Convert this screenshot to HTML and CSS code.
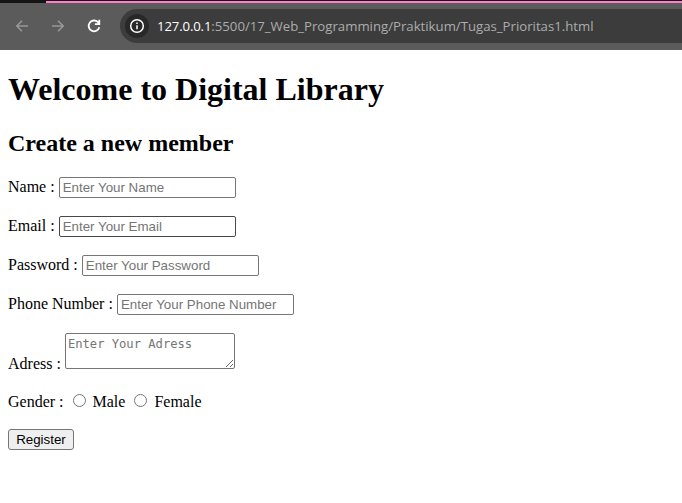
FILE: index.html
```html
<!DOCTYPE html>
<html lang="en">
<head>
<meta charset="utf-8">
<title>Digital Library</title>
<link rel="stylesheet" href="styles.css">
</head>
<body>
<header class="browser">
  <div class="tabstrip"><div class="tab-edge"></div></div>
  <div class="toolbar">
    <svg class="nav dim" viewBox="0 0 16 16"><path d="M14 8H3M8 2.8L2.8 8 8 13.2"/></svg>
    <svg class="nav dim" viewBox="0 0 16 16"><path d="M2 8h11M8 2.8L13.2 8 8 13.2"/></svg>
    <svg class="nav" viewBox="0 0 16 16"><path d="M13.3 9.2A5.4 5.4 0 1 1 12 4.2L13.3 5.6M13.3 1.8v4.4H8.9"/></svg>
    <div class="address">
      <span class="info"><svg viewBox="0 0 16 16"><circle cx="8" cy="8" r="6.3"/><path d="M8 7.2v4M8 4.5v1.6"/></svg></span>
      <span class="url"><span class="host">127.0.0.1</span>:5500/17_Web_Programming/Praktikum/Tugas_Prioritas1.html</span>
    </div>
  </div>
</header>
<main class="page">
  <h1>Welcome to Digital Library</h1>
  <h2>Create a new member</h2>
  <form>
    <div class="row"><label>Name : <input type="text" placeholder="Enter Your Name"></label></div>
    <div class="row"><label>Email : <input class="active" type="text" placeholder="Enter Your Email"></label></div>
    <div class="row"><label>Password : <input type="password" placeholder="Enter Your Password"></label></div>
    <div class="row"><label>Phone Number : <input type="text" placeholder="Enter Your Phone Number"></label></div>
    <div class="row area"><label>Adress : <textarea placeholder="Enter Your Adress"></textarea></label></div>
    <div class="row gender">Gender : <input type="radio" name="g"> Male <input type="radio" name="g"> Female</div>
    <button type="button">Register</button>
  </form>
</main>
</body>
</html>
```
FILE: styles.css
```css
body { margin: 0; background: #fff; color: #000; font: 16px "Liberation Serif", "Times New Roman", serif; }
.browser { height: 50px; background: #5b5b5b; overflow: hidden; }
.tabstrip { height: 3px; box-sizing: border-box; padding-top: 1px; background: #141414; }
.tab-edge { height: 2px; margin-left: 46px; background: #ff80c8; }
.toolbar { height: 46px; display: flex; align-items: center; padding-left: 14px; }
.nav { width: 16px; height: 16px; margin-right: 20px; fill: none; stroke: #fff; stroke-width: 1.8; }
.dim { stroke: #979797; stroke-width: 1.6; }
.address { flex: 1; height: 34px; margin-left: -2px; border-radius: 17px 0 0 17px; background: #3c3c3c; display: flex; align-items: center; }
.info { width: 24px; height: 24px; margin: 0 8px 0 5px; border-radius: 50%; background: #282828; display: grid; place-items: center; }
.info svg { width: 16px; height: 16px; fill: none; stroke: #fff; stroke-width: 1.5; }
.url { font: 13.2px "Open Sans", sans-serif; letter-spacing: 0; color: #acacac; white-space: nowrap; }
.host { letter-spacing: -0.15px; color: #fff; }
.page { padding: 0 8px; }
h1 { margin: 21px 0 22px; font-size: 32px; line-height: 37px; }
h2 { margin: 0 0 20px; font-size: 24px; line-height: 27px; }
.row { height: 21px; margin-bottom: 18px; white-space: nowrap; }
.row input[type="text"], .row input[type="password"] { box-sizing: border-box; width: 177px; height: 21px; margin: 0; padding: 1px 3px; border: 1px solid #767676; border-radius: 2px; font: 13.333px "Liberation Sans", Arial, sans-serif; }
.row input.active { border-color: #484848; }
::placeholder { color: #757575; }
.area { height: 36px; }
.gender { height: 18px; padding-top: 4px; margin-bottom: 20px; }
textarea { box-sizing: border-box; width: 170px; height: 36px; margin: 0; padding: 2px; border: 1px solid #767676; border-radius: 2px; font: 12.15px/16px "DejaVu Sans Mono", monospace; }
button { box-sizing: border-box; width: 66px; height: 21px; padding: 1px 6px; border: 1px solid #767676; border-radius: 3px; background: #efefef; color: #000; font: 13.333px "Liberation Sans", Arial, sans-serif; display: block; }
```
